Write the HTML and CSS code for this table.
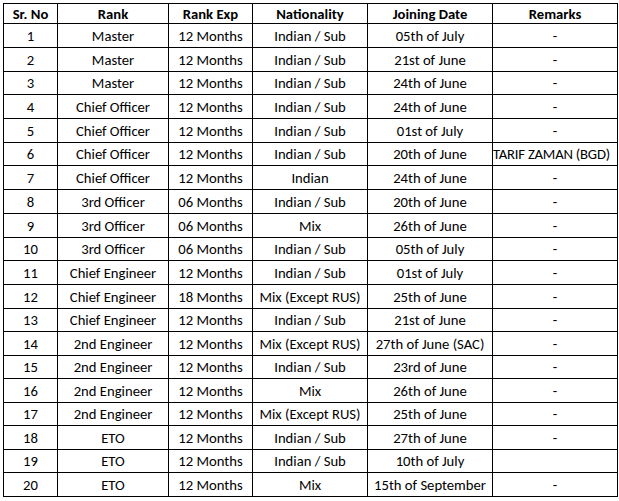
FILE: index.html
```html
<!DOCTYPE html>
<html>
<head>
<meta charset="utf-8">
<link rel="stylesheet" href="styles.css">
</head>
<body>
<table class="grid">
<colgroup>
<col class="c1"><col class="c2"><col class="c3"><col class="c4"><col class="c5"><col class="c6">
</colgroup>
<thead>
<tr class="head"><th>Sr. No</th><th>Rank</th><th>Rank Exp</th><th>Nationality</th><th>Joining Date</th><th>Remarks</th></tr>
</thead>
<tbody>
<tr><td>1</td><td>Master</td><td>12 Months</td><td>Indian / Sub</td><td>05th of July</td><td>-</td></tr>
<tr><td>2</td><td>Master</td><td>12 Months</td><td>Indian / Sub</td><td>21st of June</td><td>-</td></tr>
<tr class="s"><td>3</td><td>Master</td><td>12 Months</td><td>Indian / Sub</td><td>24th of June</td><td>-</td></tr>
<tr><td>4</td><td>Chief Officer</td><td>12 Months</td><td>Indian / Sub</td><td>24th of June</td><td>-</td></tr>
<tr><td>5</td><td>Chief Officer</td><td>12 Months</td><td>Indian / Sub</td><td>01st of July</td><td>-</td></tr>
<tr class="s"><td>6</td><td>Chief Officer</td><td>12 Months</td><td>Indian / Sub</td><td>20th of June</td><td class="tight">TARIF ZAMAN (BGD)</td></tr>
<tr><td>7</td><td>Chief Officer</td><td>12 Months</td><td>Indian</td><td>24th of June</td><td>-</td></tr>
<tr><td>8</td><td>3rd Officer</td><td>06 Months</td><td>Indian / Sub</td><td>20th of June</td><td>-</td></tr>
<tr><td>9</td><td>3rd Officer</td><td>06 Months</td><td>Mix</td><td>26th of June</td><td>-</td></tr>
<tr class="s"><td>10</td><td>3rd Officer</td><td>06 Months</td><td>Indian / Sub</td><td>05th of July</td><td>-</td></tr>
<tr><td>11</td><td>Chief Engineer</td><td>12 Months</td><td>Indian / Sub</td><td>01st of July</td><td>-</td></tr>
<tr><td>12</td><td>Chief Engineer</td><td>18 Months</td><td>Mix (Except RUS)</td><td>25th of June</td><td>-</td></tr>
<tr class="s"><td>13</td><td>Chief Engineer</td><td>12 Months</td><td>Indian / Sub</td><td>21st of June</td><td>-</td></tr>
<tr><td>14</td><td>2nd Engineer</td><td>12 Months</td><td>Mix (Except RUS)</td><td>27th of June (SAC)</td><td>-</td></tr>
<tr class="s"><td>15</td><td>2nd Engineer</td><td>12 Months</td><td>Indian / Sub</td><td>23rd of June</td><td>-</td></tr>
<tr><td>16</td><td>2nd Engineer</td><td>12 Months</td><td>Mix</td><td>26th of June</td><td>-</td></tr>
<tr class="s"><td>17</td><td>2nd Engineer</td><td>12 Months</td><td>Mix (Except RUS)</td><td>25th of June</td><td>-</td></tr>
<tr><td>18</td><td>ETO</td><td>12 Months</td><td>Indian / Sub</td><td>27th of June</td><td>-</td></tr>
<tr class="s"><td>19</td><td>ETO</td><td>12 Months</td><td>Indian / Sub</td><td>10th of July</td><td></td></tr>
<tr><td>20</td><td>ETO</td><td>12 Months</td><td>Mix</td><td>15th of September</td><td>-</td></tr>
</tbody>
</table>
</body>
</html>
```

FILE: styles.css
```css
html, body {
  margin: 0;
  padding: 0;
  background: #ffffff;
}
body {
  padding: 3px 0 0 3px;
  font-family: Carlito, Calibri, "Open Sans", "Liberation Sans", sans-serif;
  font-size: 14.67px;
  color: #000000;
}
.grid {
  border-collapse: collapse;
  table-layout: fixed;
  width: 614px;
}
.c1 { width: 54px; }
.c2 { width: 111px; }
.c3 { width: 84px; }
.c4 { width: 115px; }
.c5 { width: 125px; }
.c6 { width: 125px; }
.grid th, .grid td {
  border: 1px solid #000000;
  padding: 0;
  text-align: center;
  vertical-align: middle;
  white-space: nowrap;
  overflow: hidden;
  line-height: 18px;
}
.grid th {
  font-weight: bold;
}
.head th {
  height: 19px;
}
.grid tbody tr {
  height: 24px;
}
.grid tbody tr.s {
  height: 23px;
}
.grid td.tight {
  text-align: left;
  letter-spacing: -0.2px;
}
```
